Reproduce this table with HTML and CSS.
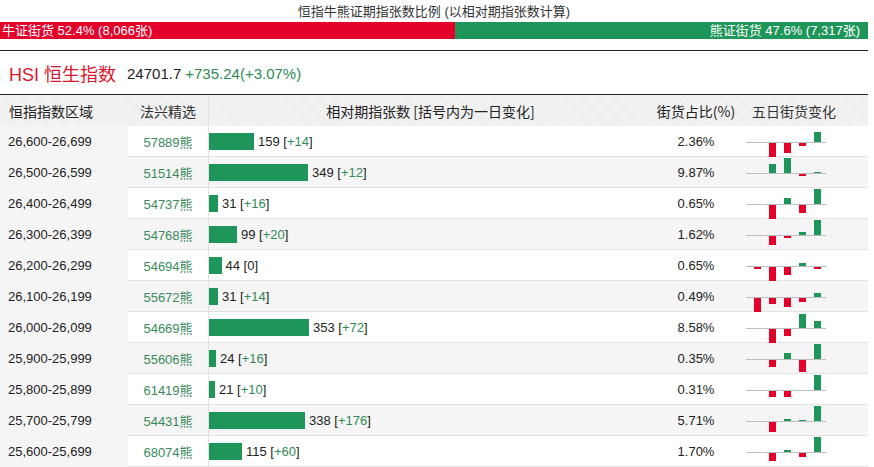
FILE: index.html
```html
<!DOCTYPE html>
<html lang="zh">
<head>
<meta charset="utf-8">
<title>恒指牛熊证期指张数比例</title>
<link rel="stylesheet" href="styles.css">
</head>
<body>
<div class="page">
  <div class="ratio-title">恒指牛熊证期指张数比例 (以相对期指张数计算)</div>
  <div class="ratio-bar">
    <div class="ratio-bull" style="width:52.4%">牛证街货 52.4% (8,066张)</div>
    <div class="ratio-bear">熊证街货 47.6% (7,317张)</div>
  </div>

  <div class="index-head">
    <span class="index-name">HSI 恒生指数</span>
    <span class="index-price">24701.7</span>
    <span class="index-change">+735.24(+3.07%)</span>
  </div>

  <div class="table">
    <div class="row head">
      <div class="c1">恒指指数区域</div>
      <div class="c2">法兴精选</div>
      <div class="c3 center">相对期指张数 [括号内为一日变化]</div>
      <div class="c4">街货占比(%)</div>
      <div class="c5 head5">五日街货变化</div>
    </div>

    <div class="row">
      <div class="c1">26,600-26,699</div>
      <div class="c2"><span class="code">57889熊</span></div>
      <div class="c3"><span class="bar" style="width:45px"></span><span class="num">159 [<span class="chg">+14</span>]</span></div>
      <div class="c4">2.36%</div>
      <div class="c5"><svg class="spark" width="80" height="31" viewBox="0 0 80 31"><line x1="0" y1="16.5" x2="80" y2="16.5"/><rect class="dn" x="23" y="17" width="7" height="15"/><rect class="dn" x="38" y="17" width="7" height="10"/><rect class="dn" x="53" y="17" width="7" height="3"/><rect class="up" x="68" y="6" width="7" height="10"/></svg></div>
    </div>

    <div class="row alt">
      <div class="c1">26,500-26,599</div>
      <div class="c2"><span class="code">51514熊</span></div>
      <div class="c3"><span class="bar" style="width:99px"></span><span class="num">349 [<span class="chg">+12</span>]</span></div>
      <div class="c4">9.87%</div>
      <div class="c5"><svg class="spark" width="80" height="31" viewBox="0 0 80 31"><line x1="0" y1="16.5" x2="80" y2="16.5"/><rect class="up" x="23" y="7" width="7" height="9"/><rect class="up" x="38" y="1" width="7" height="15"/><rect class="dn" x="53" y="17" width="7" height="2"/><rect class="up" x="68" y="15" width="7" height="1"/></svg></div>
    </div>

    <div class="row">
      <div class="c1">26,400-26,499</div>
      <div class="c2"><span class="code">54737熊</span></div>
      <div class="c3"><span class="bar" style="width:9px"></span><span class="num">31 [<span class="chg">+16</span>]</span></div>
      <div class="c4">0.65%</div>
      <div class="c5"><svg class="spark" width="80" height="31" viewBox="0 0 80 31"><line x1="0" y1="16.5" x2="80" y2="16.5"/><rect class="dn" x="23" y="17" width="7" height="15"/><rect class="up" x="38" y="10" width="7" height="6"/><rect class="dn" x="53" y="17" width="7" height="8"/><rect class="up" x="68" y="1" width="7" height="15"/></svg></div>
    </div>

    <div class="row alt">
      <div class="c1">26,300-26,399</div>
      <div class="c2"><span class="code">54768熊</span></div>
      <div class="c3"><span class="bar" style="width:28px"></span><span class="num">99 [<span class="chg">+20</span>]</span></div>
      <div class="c4">1.62%</div>
      <div class="c5"><svg class="spark" width="80" height="31" viewBox="0 0 80 31"><line x1="0" y1="16.5" x2="80" y2="16.5"/><rect class="dn" x="23" y="17" width="7" height="9"/><rect class="dn" x="38" y="17" width="7" height="2"/><rect class="up" x="53" y="13" width="7" height="3"/><rect class="up" x="68" y="1" width="7" height="15"/></svg></div>
    </div>

    <div class="row">
      <div class="c1">26,200-26,299</div>
      <div class="c2"><span class="code">54694熊</span></div>
      <div class="c3"><span class="bar" style="width:12.5px"></span><span class="num">44 [0]</span></div>
      <div class="c4">0.65%</div>
      <div class="c5"><svg class="spark" width="80" height="31" viewBox="0 0 80 31"><line x1="0" y1="16.5" x2="80" y2="16.5"/><rect class="dn" x="8" y="17" width="7" height="2"/><rect class="dn" x="23" y="17" width="7" height="15"/><rect class="dn" x="38" y="17" width="7" height="8"/><rect class="up" x="53" y="13" width="7" height="3"/><rect class="dn" x="68" y="17" width="7" height="2"/></svg></div>
    </div>

    <div class="row alt">
      <div class="c1">26,100-26,199</div>
      <div class="c2"><span class="code">55672熊</span></div>
      <div class="c3"><span class="bar" style="width:9px"></span><span class="num">31 [<span class="chg">+14</span>]</span></div>
      <div class="c4">0.49%</div>
      <div class="c5"><svg class="spark" width="80" height="31" viewBox="0 0 80 31"><line x1="0" y1="16.5" x2="80" y2="16.5"/><rect class="dn" x="8" y="17" width="7" height="15"/><rect class="dn" x="23" y="17" width="7" height="6"/><rect class="dn" x="38" y="17" width="7" height="9"/><rect class="dn" x="53" y="17" width="7" height="4"/><rect class="up" x="68" y="12" width="7" height="4"/></svg></div>
    </div>

    <div class="row">
      <div class="c1">26,000-26,099</div>
      <div class="c2"><span class="code">54669熊</span></div>
      <div class="c3"><span class="bar" style="width:100px"></span><span class="num">353 [<span class="chg">+72</span>]</span></div>
      <div class="c4">8.58%</div>
      <div class="c5"><svg class="spark" width="80" height="31" viewBox="0 0 80 31"><line x1="0" y1="16.5" x2="80" y2="16.5"/><rect class="dn" x="23" y="17" width="7" height="15"/><rect class="dn" x="38" y="17" width="7" height="7"/><rect class="up" x="53" y="2" width="7" height="14"/><rect class="up" x="68" y="9" width="7" height="7"/></svg></div>
    </div>

    <div class="row alt">
      <div class="c1">25,900-25,999</div>
      <div class="c2"><span class="code">55606熊</span></div>
      <div class="c3"><span class="bar" style="width:7px"></span><span class="num">24 [<span class="chg">+16</span>]</span></div>
      <div class="c4">0.35%</div>
      <div class="c5"><svg class="spark" width="80" height="31" viewBox="0 0 80 31"><line x1="0" y1="16.5" x2="80" y2="16.5"/><rect class="dn" x="23" y="17" width="7" height="7"/><rect class="up" x="38" y="10" width="7" height="6"/><rect class="dn" x="53" y="17" width="7" height="12"/><rect class="up" x="68" y="1" width="7" height="15"/></svg></div>
    </div>

    <div class="row">
      <div class="c1">25,800-25,899</div>
      <div class="c2"><span class="code">61419熊</span></div>
      <div class="c3"><span class="bar" style="width:6px"></span><span class="num">21 [<span class="chg">+10</span>]</span></div>
      <div class="c4">0.31%</div>
      <div class="c5"><svg class="spark" width="80" height="31" viewBox="0 0 80 31"><line x1="0" y1="16.5" x2="80" y2="16.5"/><rect class="dn" x="23" y="17" width="7" height="6"/><rect class="dn" x="38" y="17" width="7" height="6"/><rect class="up" x="68" y="1" width="7" height="15"/></svg></div>
    </div>

    <div class="row alt">
      <div class="c1">25,700-25,799</div>
      <div class="c2"><span class="code">54431熊</span></div>
      <div class="c3"><span class="bar" style="width:96px"></span><span class="num">338 [<span class="chg">+176</span>]</span></div>
      <div class="c4">5.71%</div>
      <div class="c5"><svg class="spark" width="80" height="31" viewBox="0 0 80 31"><line x1="0" y1="16.5" x2="80" y2="16.5"/><rect class="dn" x="23" y="17" width="7" height="10"/><rect class="up" x="38" y="14" width="7" height="2"/><rect class="up" x="53" y="15" width="7" height="1"/><rect class="up" x="68" y="1" width="7" height="15"/></svg></div>
    </div>

    <div class="row">
      <div class="c1">25,600-25,699</div>
      <div class="c2"><span class="code">68074熊</span></div>
      <div class="c3"><span class="bar" style="width:33px"></span><span class="num">115 [<span class="chg">+60</span>]</span></div>
      <div class="c4">1.70%</div>
      <div class="c5"><svg class="spark" width="80" height="31" viewBox="0 0 80 31"><line x1="0" y1="16.5" x2="80" y2="16.5"/><rect class="dn" x="23" y="17" width="7" height="8"/><rect class="up" x="38" y="14" width="7" height="2"/><rect class="dn" x="53" y="17" width="7" height="4"/><rect class="up" x="68" y="1" width="7" height="15"/></svg></div>
    </div>
  </div>
</div>
</body>
</html>
```
FILE: styles.css
```css
* { box-sizing: border-box; }

html, body {
  margin: 0;
  padding: 0;
  background: #fff;
}

body {
  font-family: "Liberation Sans", Arial, "Noto Sans CJK SC", sans-serif;
  color: #333;
  font-size: 13px;
}

.page {
  width: 868px;
}

.ratio-title {
  height: 22px;
  line-height: 22px;
  padding-top: 1px;
  text-align: center;
  font-size: 13px;
  color: #333;
}

.ratio-bar {
  display: flex;
  height: 17px;
  line-height: 17px;
  color: #fff;
  font-size: 13px;
  margin-bottom: 11px;
}

.ratio-bull {
  background: #e3002b;
  padding-left: 2px;
  white-space: nowrap;
}

.ratio-bear {
  flex: 1;
  background: #1f9659;
  text-align: right;
  padding-right: 8px;
  white-space: nowrap;
}

.index-head {
  border-top: 1px solid #222;
  height: 44px;
  display: flex;
  align-items: center;
  padding-left: 9px;
  padding-top: 1px;
}

.index-name {
  color: #d9182d;
  font-size: 18px;
  margin-right: 11px;
}

.index-price {
  color: #222;
  font-size: 15px;
  margin-right: 4px;
}

.index-change {
  color: #2e8b57;
  font-size: 15px;
}

.table {
  border-top: 1px solid #222;
}

.row {
  display: grid;
  grid-template-columns: 128px 80px 438px 100px 122px;
  height: 31px;
  border-bottom: 1px solid #e2e2e2;
  background: #fff;
}

.row.alt {
  background: #f5f5f5;
}

.row > div {
  display: flex;
  align-items: center;
  white-space: nowrap;
}

.row.head {
  background: repeating-linear-gradient(45deg, #ececec 0 1px, #f3f3f3 1px 3px);
  border-bottom: none;
  font-size: 14px;
  color: #333;
  font-family: "Noto Sans CJK SC", "Liberation Sans", sans-serif;
}

.row.head > div {
  background: transparent;
}

.c1 {
  padding-left: 8px;
  background: #f5f5f5;
  color: #222;
}

.row.head .c1 {
  padding-left: 9px;
}

.c2 {
  justify-content: center;
}

.code {
  color: #3a8a5c;
}

.c3 {
  border-left: 1px solid #e2e2e2;
  color: #222;
}

.c3.center {
  justify-content: center;
  padding-left: 6px;
}

.bar {
  display: inline-block;
  height: 17px;
  background: #1f9659;
  margin-right: 4px;
}

.chg {
  color: #2e8b57;
}

.c4 {
  justify-content: center;
  color: #222;
}

.c5 {
  justify-content: flex-start;
}

.head5 {
  padding-left: 6px;
}

.spark {
  display: block;
}

.spark line {
  stroke: #bdbdbd;
  stroke-width: 1;
}

.spark .up {
  fill: #1f9659;
}

.spark .dn {
  fill: #e3002b;
}
```
